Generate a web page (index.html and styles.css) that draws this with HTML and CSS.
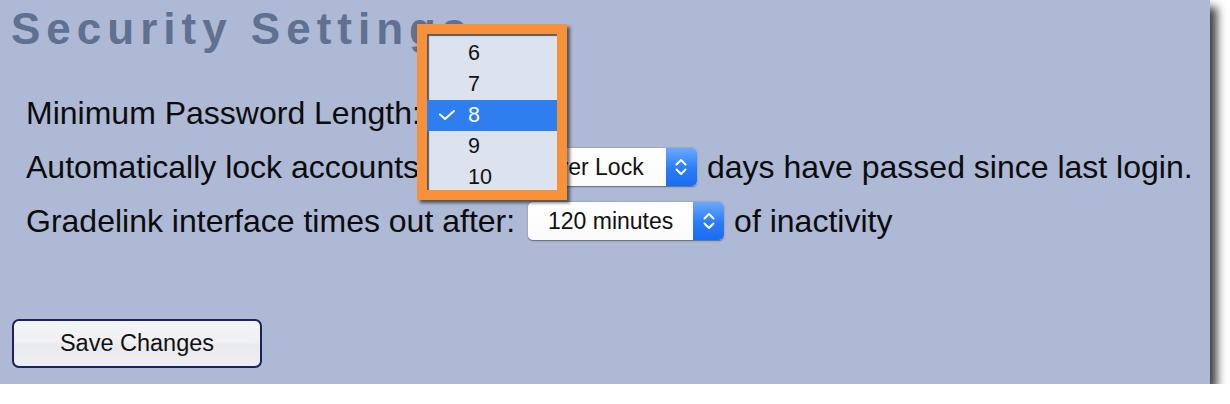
FILE: index.html
```html
<!DOCTYPE html>
<html>
<head>
<meta charset="utf-8">
<link rel="stylesheet" href="styles.css">
</head>
<body>
<div class="panel">
  <h1 class="title">Security Settings</h1>
  <div class="rows">
    <div class="row">
      <span class="txt">Minimum Password Length:</span>
      <span class="select sel-min"><span class="label">8</span><span class="btn"><svg width="14" height="24" viewBox="0 0 14 24"><path d="M2.5 9.5 L7 5 L11.5 9.5 M2.5 14.5 L7 19 L11.5 14.5" fill="none" stroke="#fff" stroke-width="2" stroke-linecap="round" stroke-linejoin="round"/></svg></span></span>
    </div>
    <div class="row">
      <span class="txt">Automatically lock accounts after</span>
      <span class="select sel-lock"><span class="label">Never Lock</span><span class="btn"><svg width="14" height="24" viewBox="0 0 14 24"><path d="M2.5 9.5 L7 5 L11.5 9.5 M2.5 14.5 L7 19 L11.5 14.5" fill="none" stroke="#fff" stroke-width="2" stroke-linecap="round" stroke-linejoin="round"/></svg></span></span>
      <span class="txt">days have passed since last login.</span>
    </div>
    <div class="row">
      <span class="txt">Gradelink interface times out after:</span>
      <span class="select sel-timeout"><span class="label">120 minutes</span><span class="btn"><svg width="14" height="24" viewBox="0 0 14 24"><path d="M2.5 9.5 L7 5 L11.5 9.5 M2.5 14.5 L7 19 L11.5 14.5" fill="none" stroke="#fff" stroke-width="2" stroke-linecap="round" stroke-linejoin="round"/></svg></span></span>
      <span class="txt">of inactivity</span>
    </div>
  </div>
  <button class="save">Save Changes</button>

  <div class="popup">
    <ul class="menu">
      <li class="item">6</li>
      <li class="item">7</li>
      <li class="item selected"><svg class="check" width="16" height="10" viewBox="0 0 16 10"><polyline points="1,4.5 6,9 15,1" fill="none" stroke="#fff" stroke-width="2" stroke-linecap="round" stroke-linejoin="round"/></svg>8</li>
      <li class="item">9</li>
      <li class="item">10</li>
    </ul>
  </div>
</div>
</body>
</html>
```

FILE: styles.css
```css
html, body {
  margin: 0;
  padding: 0;
  background: #ffffff;
}

body {
  font-family: "Liberation Sans", Arial, sans-serif;
  color: #111;
}

.panel {
  position: relative;
  box-sizing: border-box;
  width: 1210px;
  height: 384px;
  background: #adb9d5;
  box-shadow: 7px 7px 9px rgba(0, 0, 0, 0.75);
  padding: 0 12px;
  display: flex;
  flex-direction: column;
  align-items: flex-start;
}

.title {
  margin: 0 0 0 -1px;
  padding-top: 5px;
  font-size: 44px;
  line-height: 48px;
  font-weight: bold;
  letter-spacing: 6px;
  color: #607090;
  white-space: nowrap;
}

.rows {
  margin-top: 33px;
  margin-left: 14px;
  display: flex;
  flex-direction: column;
}

.row {
  display: flex;
  align-items: center;
  height: 54px;
  font-size: 32px;
  line-height: 54px;
  white-space: nowrap;
  color: #0c0c0c;
}

.select {
  display: inline-flex;
  box-sizing: border-box;
  height: 38px;
  margin: 0 10px 0 13px;
  border-radius: 5px;
  background: linear-gradient(#ffffff, #fbfbfb);
  box-shadow: 0 0.5px 1.5px rgba(0, 0, 0, 0.45);
  overflow: hidden;
  font-size: 23px;
  line-height: 38px;
  color: #111;
}

.select .label {
  flex: 1;
  text-align: center;
}

.select .btn {
  width: 31px;
  display: flex;
  align-items: center;
  justify-content: center;
  background: linear-gradient(#6aa9fc, #2a7cf6 55%, #1a6cf2);
}

.sel-min { width: 80px; }
.sel-lock { width: 192px; }
.sel-timeout { width: 196px; }

.save {
  margin-top: auto;
  margin-bottom: 16px;
  box-sizing: border-box;
  width: 250px;
  height: 49px;
  border: 2px solid #1b2163;
  border-radius: 7px;
  background: linear-gradient(#f3f4f6, #eff0f3 48%, #e9eaed 52%, #eeeff2);
  font-family: "Liberation Sans", Arial, sans-serif;
  font-size: 23.5px;
  color: #111;
  padding: 0;
}

.popup {
  position: absolute;
  left: 417px;
  top: 24px;
  box-sizing: border-box;
  width: 150px;
  height: 176px;
  border: 10px solid #f7923a;
  box-shadow: 3px 3px 3px rgba(0, 0, 0, 0.55);
  overflow: hidden;
  background: #dce3ee;
}

.menu {
  list-style: none;
  margin: 0;
  padding: 4px 0 0 0;
  height: 100%;
  box-sizing: border-box;
  box-shadow: inset 2px 2px 1px rgba(40, 45, 60, 0.75);
}

.item {
  position: relative;
  height: 31px;
  line-height: 31px;
  padding-left: 41px;
  font-size: 21.5px;
  color: #111;
}

.item.selected {
  background: #2f7ef0;
  color: #fff;
}

.check {
  position: absolute;
  left: 12px;
  top: 10px;
}
```
